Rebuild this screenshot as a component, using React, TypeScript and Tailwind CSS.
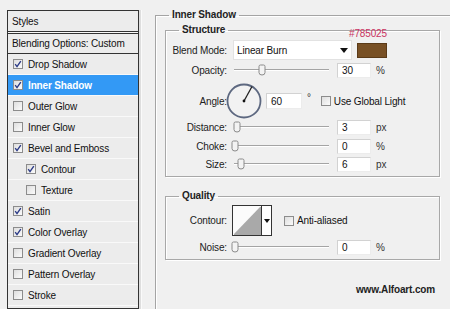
import React from "react";

const font = { fontFamily: '"Liberation Sans", Arial, sans-serif' };

function Check({ checked }: { checked: boolean }) {
  return (
    <span className="flex h-[10px] w-[10px] shrink-0 items-center justify-center border border-[#8c8c8c] bg-gradient-to-br from-[#dedede] to-[#fbfbfb]">
      {checked && (
        <svg width="8" height="8" viewBox="0 0 8 8">
          <path d="M1.2 4.2 L3 6.6 L6.8 1.2" fill="none" stroke="#2b3a86" strokeWidth="1.4" />
        </svg>
      )}
    </span>
  );
}

function StyleRow({ label, checked, active, indent }: { label: string; checked: boolean; active?: boolean; indent?: boolean }) {
  return (
    <div
      className={
        "flex h-[21px] items-center border-b border-[#f9f9f9] " +
        (active ? "bg-[#3399f5] font-bold text-white" : "bg-[#ececec] text-[#111]") +
        (indent ? " pl-[18px]" : " pl-[5px]")
      }
    >
      <Check checked={checked} />
      <span className="ml-[5px]">{label}</span>
    </div>
  );
}

function Thumb() {
  return (
    <svg width="8" height="12" viewBox="0 0 8 12" className="absolute top-[2px]">
      <path d="M1 2.5 Q1 1 2.5 1 L5.5 1 Q7 1 7 2.5 L7 8.5 Q7 11 4 11 Q1 11 1 8.5 Z" fill="#f3f3f3" stroke="#8a8a8a" strokeWidth="1" />
    </svg>
  );
}

function Slider({ pos }: { pos: number }) {
  return (
    <div className="relative h-[16px] w-[97px]">
      <div className="absolute left-[2px] right-0 top-[7px] h-[1px] bg-[#a4a4a4]" />
      <div className="absolute left-[2px] right-0 top-[8px] h-[1px] bg-white" />
      <div className="absolute top-0" style={{ left: pos }}>
        <Thumb />
      </div>
    </div>
  );
}

function Input({ value, w = 34, h = 15 }: { value: string; w?: number; h?: number }) {
  return (
    <div
      className="flex items-center border border-t-[#d2d2d2] border-l-[#d2d2d2] border-r-[#ececec] border-b-[#ececec] bg-white pl-[4px] text-[#111]"
      style={{ width: w, height: h }}
    >
      {value}
    </div>
  );
}

function Label({ children }: { children: React.ReactNode }) {
  return <div className="w-[62px] shrink-0 pr-[1px] text-right text-[#222]">{children}</div>;
}

function Unit({ children }: { children: React.ReactNode }) {
  return <span className="ml-[5px] text-[#333]">{children}</span>;
}

export default function App() {
  const styles: { label: string; checked: boolean; active?: boolean; indent?: boolean }[] = [
    { label: "Drop Shadow", checked: true },
    { label: "Inner Shadow", checked: true, active: true },
    { label: "Outer Glow", checked: false },
    { label: "Inner Glow", checked: false },
    { label: "Bevel and Emboss", checked: true },
    { label: "Contour", checked: true, indent: true },
    { label: "Texture", checked: false, indent: true },
    { label: "Satin", checked: true },
    { label: "Color Overlay", checked: true },
    { label: "Gradient Overlay", checked: false },
    { label: "Pattern Overlay", checked: false },
    { label: "Stroke", checked: false },
  ];

  return (
    <div className="flex h-[309px] w-[450px] overflow-hidden bg-[#f0f0f0] text-[10px] tracking-[-0.15px]" style={font}>
      {/* Left styles list */}
      <div className="flex shrink-0 pl-[7px] pt-[10px]">
        <div className="w-[132px] border border-[#333] bg-[#ececec]">
          <div className="flex h-[21px] items-center border-b border-[#333] pl-[4px] text-[#111]">Styles</div>
          <div className="h-[1px] bg-[#f9f9f9]" />
          <div className="flex h-[21px] items-center border-y border-[#333] pl-[4px] text-[#111]">Blending Options: Custom</div>
          {styles.map((s) => (
            <StyleRow key={s.label} {...s} />
          ))}
        </div>
        <div className="h-full w-[3px] border-r border-[#fafafa] bg-[#dedede]" />
      </div>

      {/* Right settings */}
      <div className="ml-[13px] shrink-0">
        <fieldset className="mt-[8px] w-[320px] border-l border-t border-[#a4a4a4] pb-[40px] pl-[9px] shadow-[inset_1px_1px_0_#fff]">
          <legend className="ml-[4px] px-[3px] font-bold leading-[14px] text-[#222]">Inner Shadow</legend>

          <fieldset className="relative mt-[1px] w-[275px] border border-[#a8a8a8] pb-[4px] shadow-[inset_1px_1px_0_#fff,1px_1px_0_#fff]">
            <legend className="ml-[13px] px-[3px] font-bold leading-[14px] text-[#222]">Structure</legend>
            <div className="absolute left-[183px] top-[-9px] leading-[12px] text-[#c9325f]">#785025</div>

            <div className="mt-[3px] flex h-[20px] items-center">
              <Label>Blend Mode:</Label>
              <div className="ml-[5px] flex h-[20px] w-[119px] items-center justify-between border border-[#e2e2e2] bg-white pl-[3px] pr-[3px] text-[#111]">
                <span>Linear Burn</span>
                <svg width="8" height="5" viewBox="0 0 8 5">
                  <path d="M0 0 L8 0 L4 5 Z" fill="#111" />
                </svg>
              </div>
              <div className="ml-[5px] h-[15px] w-[30px] border border-[#5a3a18] bg-[#785025]" />
            </div>

            <div className="mt-[2px] flex h-[16px] items-center">
              <Label>Opacity:</Label>
              <div className="ml-[4px]">
                <Slider pos={26} />
              </div>
              <div className="ml-[8px]">
                <Input value="30" />
              </div>
              <Unit>%</Unit>
            </div>

            <div className="mt-[5px] flex h-[36px] items-center">
              <Label>Angle:</Label>
              <svg width="36" height="36" viewBox="0 0 36 36" className="-ml-[2px]">
                <circle cx="18" cy="18" r="16.5" fill="#f2f2f2" stroke="#5d6880" strokeWidth="1.8" />
                <line x1="18" y1="18" x2="26" y2="3.5" stroke="#222" strokeWidth="1.3" />
                <circle cx="18" cy="18" r="1.4" fill="#111" />
              </svg>
              <div className="ml-[4px]">
                <Input value="60" w={36} h={16} />
              </div>
              <span className="-mt-[8px] ml-[5px] text-[#333]">°</span>
              <div className="ml-[10px]">
                <Check checked={false} />
              </div>
              <span className="ml-[3px] text-[#111]">Use Global Light</span>
            </div>

            <div className="flex h-[16px] items-center">
              <Label>Distance:</Label>
              <div className="ml-[4px]">
                <Slider pos={1} />
              </div>
              <div className="ml-[8px]">
                <Input value="3" />
              </div>
              <Unit>px</Unit>
            </div>

            <div className="mt-[3px] flex h-[16px] items-center">
              <Label>Choke:</Label>
              <div className="ml-[4px]">
                <Slider pos={-1} />
              </div>
              <div className="ml-[8px]">
                <Input value="0" />
              </div>
              <Unit>%</Unit>
            </div>

            <div className="mt-[2px] flex h-[16px] items-center">
              <Label>Size:</Label>
              <div className="ml-[4px]">
                <Slider pos={5} />
              </div>
              <div className="ml-[8px]">
                <Input value="6" />
              </div>
              <Unit>px</Unit>
            </div>
          </fieldset>

          <fieldset className="mt-[12px] w-[275px] border border-[#a8a8a8] pb-[4px] shadow-[inset_1px_1px_0_#fff,1px_1px_0_#fff]">
            <legend className="ml-[13px] px-[3px] font-bold leading-[14px] text-[#222]">Quality</legend>

            <div className="mt-[2px] flex h-[31px] items-center">
              <Label>Contour:</Label>
              <div className="ml-[4px] flex h-[31px] w-[40px] border border-[#333] bg-white">
                <svg width="28" height="29" viewBox="0 0 28 29">
                  <rect width="28" height="29" fill="#fbfbfb" />
                  <path d="M1 28 L27 1 L28 1 L28 29 L1 29 Z" fill="#a9a9a9" />
                </svg>
                <div className="flex flex-1 items-center justify-center border-l border-[#333]">
                  <svg width="6" height="4" viewBox="0 0 6 4">
                    <path d="M0 0 L6 0 L3 4 Z" fill="#111" />
                  </svg>
                </div>
              </div>
              <div className="ml-[12px]">
                <Check checked={false} />
              </div>
              <span className="ml-[3px] text-[#111]">Anti-aliased</span>
            </div>

            <div className="mt-[3px] flex h-[16px] items-center">
              <Label>Noise:</Label>
              <div className="ml-[4px]">
                <Slider pos={-1} />
              </div>
              <div className="ml-[8px]">
                <Input value="0" />
              </div>
              <Unit>%</Unit>
            </div>
          </fieldset>

          <div className="mt-[23px] w-[275px] pr-[5px] text-right font-bold leading-[14px] text-[#222]">www.Alfoart.com</div>
        </fieldset>
      </div>
    </div>
  );
}
